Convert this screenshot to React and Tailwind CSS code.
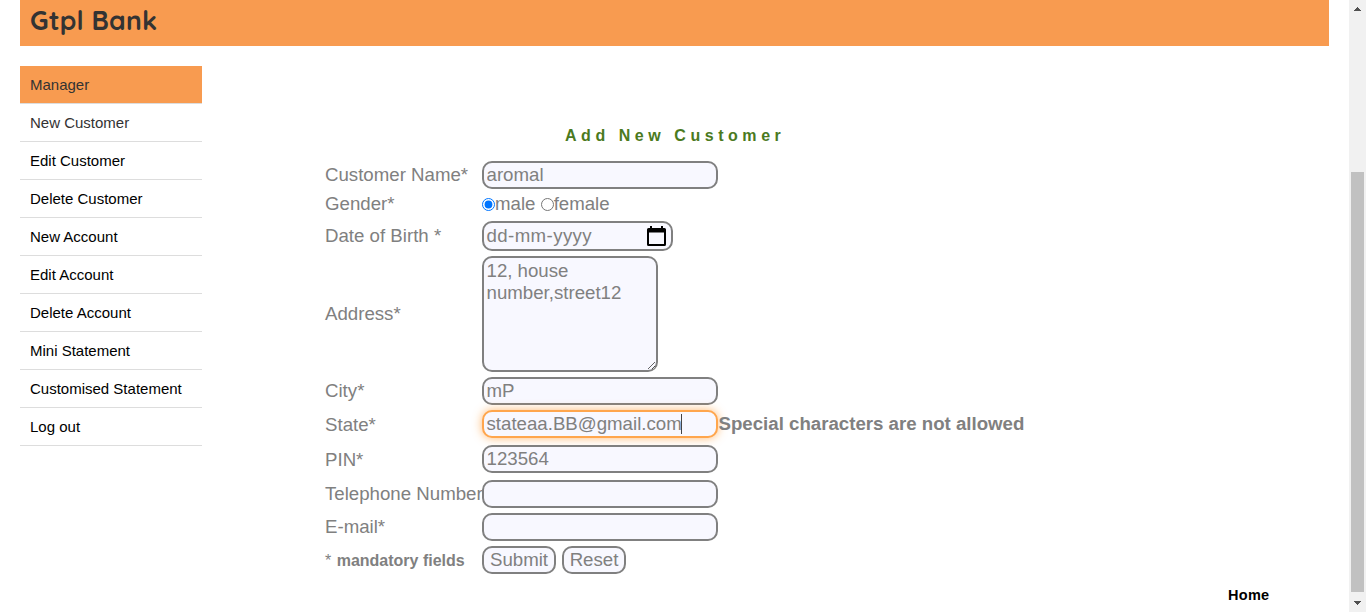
const menu = [
  'Manager',
  'New Customer',
  'Edit Customer',
  'Delete Customer',
  'New Account',
  'Edit Account',
  'Delete Account',
  'Mini Statement',
  'Customised Statement',
  'Log out',
];

const box = 'block shrink-0 rounded-[10px] border-2 border-[#808080] bg-[#f8f8ff] text-[#808080] outline-none';
const field = `${box} h-7 w-[236px] px-[2.5px] py-0`;

function Row({ label, className, labelClass = '', children }) {
  return (
    <div className={`flex items-center ${className}`}>
      <div className={`w-[157px] shrink-0 whitespace-nowrap ${labelClass}`}>{label}</div>
      {children}
    </div>
  );
}

function Sidebar() {
  return (
    <ul className="mt-5 ml-5 w-[182px] shrink-0 text-[15px]">
      {menu.map((item, i) => (
        <li
          key={item}
          className={`flex h-[38px] items-center border-b border-[#dddddd] pt-[2px] pl-[10px] whitespace-nowrap ${
            i === 0 ? 'bg-[#f89b50] text-[#333333]' : i === 1 ? 'text-[#333333]' : 'text-black'
          }`}
        >
          {item}
        </li>
      ))}
    </ul>
  );
}

function CustomerForm() {
  return (
    <form className="ml-[123px] w-[760px] pt-[79px] text-[18.667px] leading-[22px] text-[#808080]">
      <h2 className="ml-[240px] h-[22px] text-[16px] font-bold tracking-[4.55px] whitespace-nowrap text-[#4b7a1e]">
        Add New Customer
      </h2>
      <Row label="Customer Name*" className="mt-[14px] h-7">
        <input className={field} defaultValue="aromal" />
      </Row>
      <Row label="Gender*" className="mt-1 h-[22px]">
        <input type="radio" name="gender" defaultChecked className="m-0 size-[13px]" />
        <span>male&nbsp;</span>
        <input type="radio" name="gender" className="m-0 size-[13px]" />
        <span>female</span>
      </Row>
      <Row label="Date of Birth *" className="mt-[6px] h-[30px]">
        <div className={`${box} flex h-[30px] w-[191px] items-center justify-between pr-[5px] pl-[2.5px]`}>
          <span className="tracking-[0.4px]">dd-mm-yyyy</span>
          <svg viewBox="0 0 19 20" className="h-5 w-[19px]">
            <path
              d="M3 0h2v2h9V0h2v2h1.5Q19 2 19 3.5v15q0 1.500-1.500 1.500h-16Q0 20 0 18.500v-15Q0 2 1.500 2H3zM2 6.5v11.500h15V6.500z"
              fill="#000"
              fillRule="evenodd"
            />
          </svg>
        </div>
      </Row>
      <Row label="Address*" className="mt-[5px] h-[116px]">
        <textarea
          className={`${box} h-[116px] w-[176px] resize overflow-hidden px-[2.5px] py-[2px]`}
          defaultValue="12, house number,street12"
        />
      </Row>
      <Row label="City*" className="mt-[5px] h-7">
        <input className={field} defaultValue="mP" />
      </Row>
      <Row label="State*" className="mt-[5px] h-7" labelClass="pt-px">
        <div className="flex h-7 w-[236px] shrink-0 items-center rounded-[10px] border-2 border-[#ffa64d] bg-[#f8f8ff] pl-[2.5px] shadow-[0_0_10px_#ff9933b0]">
          <span>stateaa.BB@gmail.com</span>
          <span className="-ml-px h-5 w-px bg-[#444444]" />
        </div>
        <span className="ml-[0.5px] font-bold whitespace-nowrap">Special characters are not allowed</span>
      </Row>
      <Row label="PIN*" className="mt-[7px] h-7" labelClass="pt-px">
        <input className={field} defaultValue="123564" />
      </Row>
      <Row label="Telephone Number" className="mt-[7px] h-7">
        <input className={field} />
      </Row>
      <Row label="E-mail*" className="mt-[5px] h-7">
        <input className={field} />
      </Row>
      <Row
        label={
          <>
            <span className="text-[16px]">* </span>
            <b className="ml-px text-[16px]">mandatory fields</b>
          </>
        }
        className="mt-[5px] h-7"
      >
        <button type="button" className={`${box} h-7 w-[74px]`}>
          Submit
        </button>
        <button type="button" className={`${box} ml-[6px] h-7 w-16`}>
          Reset
        </button>
      </Row>
    </form>
  );
}

function Scrollbar() {
  return (
    <div className="flex w-[17px] shrink-0 flex-col items-center bg-[#f1f1f1]">
      <svg viewBox="0 0 7 4" className="mt-[7px] h-1 w-[7px]" shapeRendering="crispEdges">
        <path d="M3 0h1v1h1v1h1v1h1v1H0V3h1V2h1V1h1z" fill="#505050" />
      </svg>
      <div className="mt-[161px] h-[420px] w-[13px] bg-[#c1c1c1]" />
      <svg viewBox="0 0 7 4" className="mt-[9px] h-1 w-[7px]" shapeRendering="crispEdges">
        <path d="M0 0h7v1H6v1H5v1H4v1H3V3H2V2H1V1H0z" fill="#505050" />
      </svg>
    </div>
  );
}

export default function App() {
  return (
    <div className="flex h-[612px] w-[1366px] overflow-hidden bg-white font-['Liberation_Sans',Arial,sans-serif]">
      <div className="flex w-[1349px] flex-col">
        <header className="mr-5 ml-5 flex h-[46px] shrink-0 items-center bg-[#f89b50] pb-[5px] pl-[10px]">
          <h1 className="font-['Quicksand',Lato,sans-serif] text-[26.500px] leading-none font-bold tracking-[0.2px] text-[#333333]">
            Gtpl Bank
          </h1>
        </header>
        <main className="flex h-[530px] shrink-0">
          <Sidebar />
          <CustomerForm />
        </main>
        <footer className="mt-[9px] mr-[79.500px] flex justify-end text-[14.500px] leading-5 font-bold tracking-[0.3px] text-black">
          Home
        </footer>
      </div>
      <Scrollbar />
    </div>
  );
}
